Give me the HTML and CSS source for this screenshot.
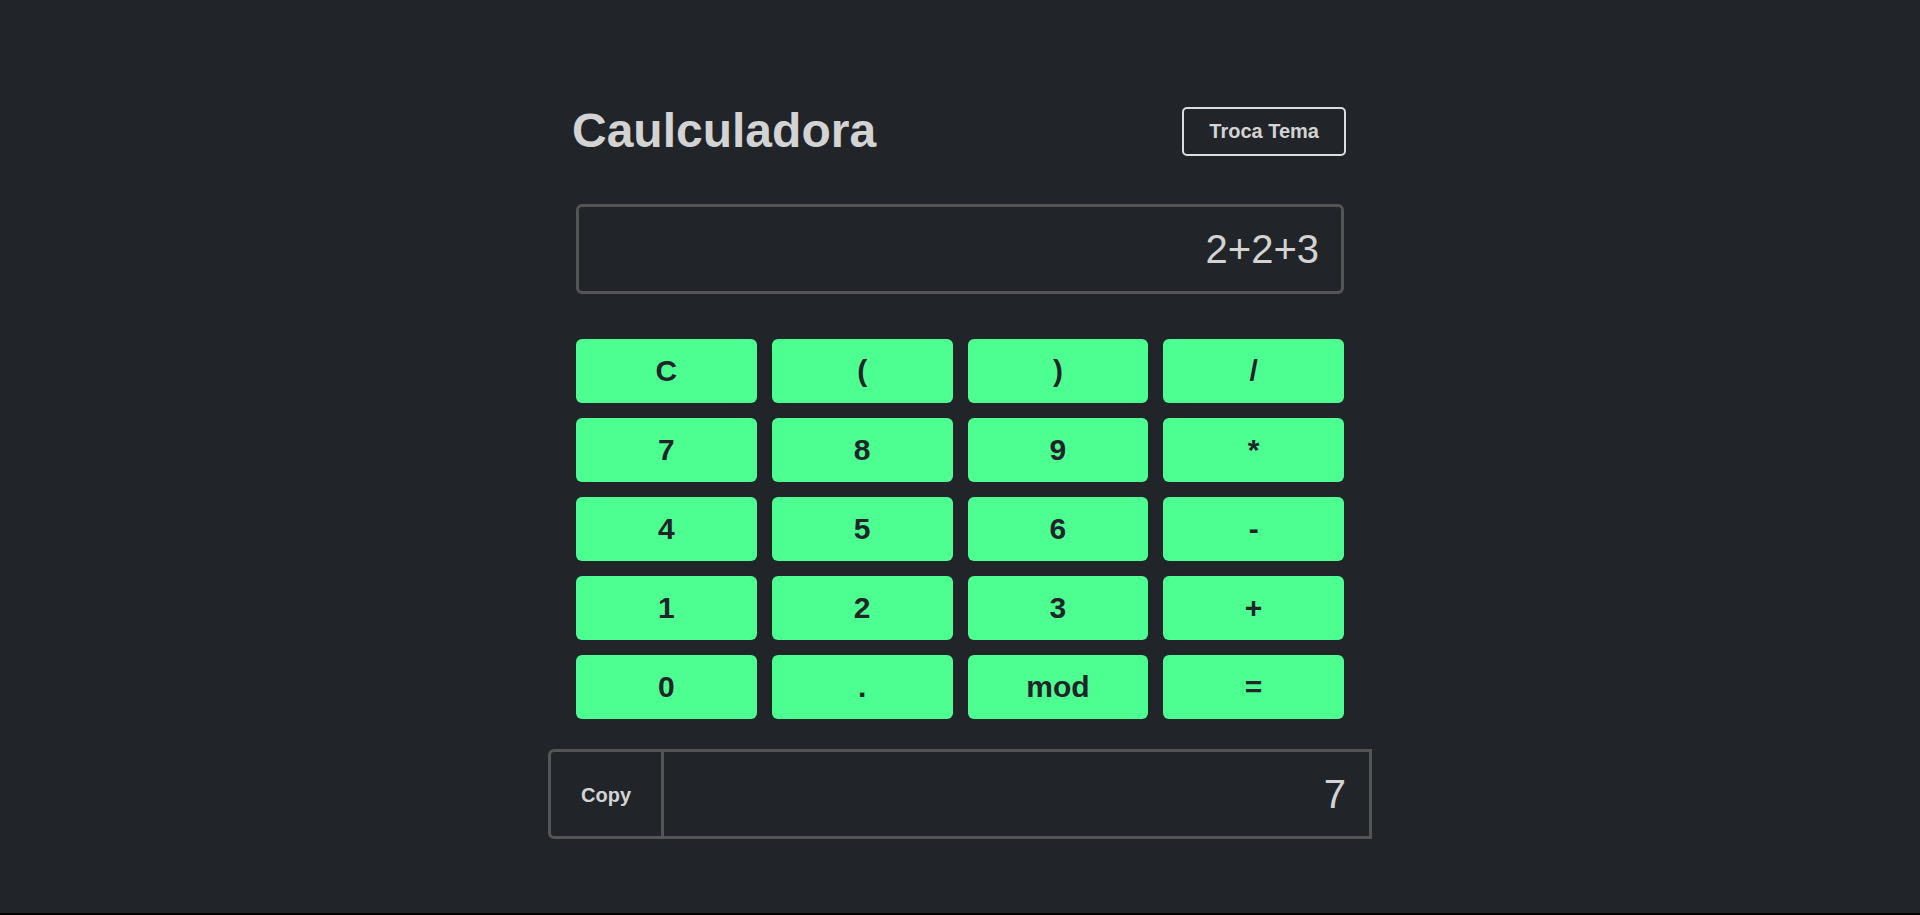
FILE: index.html
```html
<!DOCTYPE html>
<html lang="pt">
<head>
<meta charset="utf-8">
<title>Caulculadora</title>
<link rel="stylesheet" href="styles.css">
</head>
<body>
<main class="calc">
  <header class="calc-header">
    <h1 class="calc-title">Caulculadora</h1>
    <button class="theme-btn" type="button">Troca Tema</button>
  </header>
  <input class="expr" type="text" value="2+2+3" readonly>
  <div class="keys">
    <button class="key">C</button>
    <button class="key">(</button>
    <button class="key">)</button>
    <button class="key">/</button>
    <button class="key">7</button>
    <button class="key">8</button>
    <button class="key">9</button>
    <button class="key">*</button>
    <button class="key">4</button>
    <button class="key">5</button>
    <button class="key">6</button>
    <button class="key">-</button>
    <button class="key">1</button>
    <button class="key">2</button>
    <button class="key">3</button>
    <button class="key">+</button>
    <button class="key">0</button>
    <button class="key">.</button>
    <button class="key">mod</button>
    <button class="key">=</button>
  </div>
  <div class="result">
    <button class="copy-btn" type="button">Copy</button>
    <input class="result-value" type="text" value="7" readonly>
  </div>
</main>
</body>
</html>
```
FILE: styles.css
```css
html {
  background: #000;
}
body {
  margin: 0;
  min-height: calc(100vh - 2px);
  background: #212529;
  font-family: "Liberation Sans", Arial, sans-serif;
  color: #d3d3d3;
}
.calc {
  width: 768px;
  margin: 0 auto;
  padding-top: 103px;
  display: flex;
  flex-direction: column;
  align-items: center;
}
.calc-header {
  width: 774px;
  margin-left: -4px;
  margin-right: -2px;
  display: flex;
  align-items: center;
  justify-content: space-between;
}
.calc-title {
  margin: 0;
  font-size: 48px;
  font-weight: bold;
  color: #d3d3d3;
}
.theme-btn {
  height: 49px;
  margin-top: 2px;
  padding: 0 25px;
  background: transparent;
  border: 2px solid #dcdcdc;
  border-radius: 5px;
  color: #d3d3d3;
  font-family: inherit;
  font-size: 20px;
  font-weight: bold;
}
.expr {
  box-sizing: border-box;
  width: 768px;
  height: 90px;
  margin-top: 46px;
  padding: 0 22px;
  background: transparent;
  border: 3px solid #555;
  border-radius: 6px;
  color: #d3d3d3;
  font-family: inherit;
  font-size: 40px;
  text-align: right;
  outline: none;
}
.keys {
  width: 768px;
  margin-top: 45px;
  display: grid;
  grid-template-columns: repeat(4, 1fr);
  grid-auto-rows: 64px;
  gap: 15px;
}
.key {
  border: none;
  border-radius: 6px;
  background: #4dff91;
  color: #212529;
  font-family: inherit;
  font-size: 30px;
  font-weight: bold;
  padding: 0;
}
.result {
  width: 824px;
  height: 90px;
  margin-top: 30px;
  display: flex;
  align-items: stretch;
}
.copy-btn {
  box-sizing: border-box;
  flex: 0 0 116px;
  padding: 3px 0 0;
  background: transparent;
  border: 3px solid #555;
  border-radius: 6px 0 0 6px;
  color: #d3d3d3;
  font-family: inherit;
  font-size: 20px;
  font-weight: bold;
}
.result-value {
  box-sizing: border-box;
  flex: 1;
  min-width: 0;
  padding: 0 23px;
  background: transparent;
  border: 3px solid #555;
  border-left: none;
  border-radius: 0;
  color: #d3d3d3;
  font-family: inherit;
  font-size: 40px;
  text-align: right;
  outline: none;
}
```
